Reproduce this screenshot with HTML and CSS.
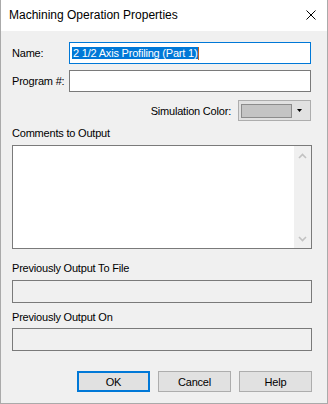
FILE: index.html
```html
<!DOCTYPE html>
<html>
<head>
<meta charset="utf-8">
<link rel="stylesheet" href="styles.css">
</head>
<body>
<div class="window">
  <div class="titlebar">
    <span class="title">Machining Operation Properties</span>
    <svg class="close" width="10" height="10" viewBox="0 0 10 10"><path d="M0.5 0.5 L9.5 9.5 M9.5 0.5 L0.5 9.5" stroke="#000" stroke-width="1" fill="none"/></svg>
  </div>
  <div class="content">
    <div class="row">
      <span class="lbl">Name:</span>
      <div class="input focused"><span class="sel">2 1/2 Axis Profiling (Part 1)</span><span class="caret"></span></div>
    </div>
    <div class="row row-program">
      <span class="lbl">Program #:</span>
      <div class="input"></div>
    </div>
    <div class="color-row">
      <span class="color-lbl">Simulation Color:</span>
      <div class="combo">
        <div class="swatch"></div>
        <svg class="arrow" width="5" height="3" viewBox="0 0 5 3"><path d="M0 0 H5 L2.5 3 Z" fill="#000"/></svg>
      </div>
    </div>
    <div class="section-lbl lbl-comments">Comments to Output</div>
    <div class="textarea">
      <div class="scroll">
        <svg width="9" height="6" viewBox="0 0 9 6"><path d="M1 5 L4.5 1.5 L8 5" stroke="#c2c2c2" stroke-width="1.6" fill="none"/></svg>
        <svg width="9" height="6" viewBox="0 0 9 6"><path d="M1 1 L4.5 4.5 L8 1" stroke="#c2c2c2" stroke-width="1.6" fill="none"/></svg>
      </div>
    </div>
    <div class="section-lbl lbl-file">Previously Output To File</div>
    <div class="box"></div>
    <div class="section-lbl lbl-on">Previously Output On</div>
    <div class="box"></div>
    <div class="buttons">
      <div class="btn default">OK</div>
      <div class="btn">Cancel</div>
      <div class="btn">Help</div>
    </div>
  </div>
</div>
</body>
</html>
```
FILE: styles.css
```css
html, body {
  margin: 0;
  padding: 0;
  background: #f0f0f0;
}
.window {
  width: 328px;
  height: 404px;
  box-sizing: border-box;
  border: 1px solid #aaaaaa;
  border-top: none;
  background: #f0f0f0;
  font-family: "Liberation Sans", Arial, sans-serif;
  font-size: 11px;
  color: #000;
  display: flex;
  flex-direction: column;
}
.titlebar {
  height: 31px;
  background: #fff;
  display: flex;
  align-items: center;
  justify-content: space-between;
  padding: 0 11px 0 8px;
}
.title {
  font-family: "Liberation Sans", Arial, sans-serif;
  font-size: 12px;
  color: #000;
  margin-top: -1px;
}
.close {
  display: block;
  margin-top: -1px;
}
.content {
  display: flex;
  flex-direction: column;
  padding: 11px 15px 0 11px;
  letter-spacing: -0.2px;
}
.row {
  display: flex;
  align-items: center;
  height: 22px;
}
.row-program {
  margin-top: 6px;
}
.lbl {
  width: 57px;
  flex: none;
}
.input {
  flex: 1;
  height: 22px;
  box-sizing: border-box;
  border: 1px solid #7a7a7a;
  background: #fff;
  margin-right: 1px;
  display: flex;
  align-items: center;
  padding-left: 2px;
}
.input.focused {
  border-color: #0078d7;
}
.sel {
  background: #0078d7;
  color: #fff;
  line-height: 12px;
  height: 12px;
  padding: 0 1px;
  white-space: nowrap;
}
.caret {
  width: 1px;
  height: 13px;
  background: #c06020;
}
.color-row {
  display: flex;
  justify-content: flex-end;
  align-items: center;
  margin-top: 8px;
  height: 21px;
}
.color-lbl {
  margin-right: 7px;
}
.combo {
  width: 73px;
  height: 21px;
  box-sizing: border-box;
  border: 1px solid #adadad;
  background: #e1e1e1;
  display: flex;
  align-items: center;
  padding-left: 2px;
  margin-right: 1px;
}
.swatch {
  width: 51px;
  height: 14px;
  box-sizing: border-box;
  border: 1px solid #8c8c8c;
  background: #c4c4c4;
}
.arrow {
  display: block;
  margin-left: 5px;
}
.section-lbl {
  line-height: 13px;
  height: 13px;
}
.lbl-comments {
  margin-top: 6px;
  margin-bottom: 5px;
}
.lbl-file {
  margin-top: 13px;
  margin-bottom: 5px;
}
.lbl-on {
  margin-top: 8px;
  margin-bottom: 4px;
}
.textarea {
  height: 104px;
  box-sizing: border-box;
  border: 1px solid #7a7a7a;
  background: #fff;
  display: flex;
  justify-content: flex-end;
}
.scroll {
  width: 17px;
  background: #f0f0f0;
  display: flex;
  flex-direction: column;
  justify-content: space-between;
  align-items: center;
  padding: 7px 0 6px;
  box-sizing: border-box;
}
.scroll svg {
  display: block;
}
.box {
  height: 23px;
  box-sizing: border-box;
  border: 1px solid #7a7a7a;
  background: #f0f0f0;
}
.buttons {
  display: flex;
  justify-content: flex-end;
  gap: 8px;
  margin-top: 20px;
}
.btn {
  width: 73px;
  height: 21px;
  box-sizing: border-box;
  border: 1px solid #adadad;
  background: #e1e1e1;
  display: flex;
  align-items: center;
  justify-content: center;
}
.btn.default {
  border: 2px solid #0078d7;
}
```
